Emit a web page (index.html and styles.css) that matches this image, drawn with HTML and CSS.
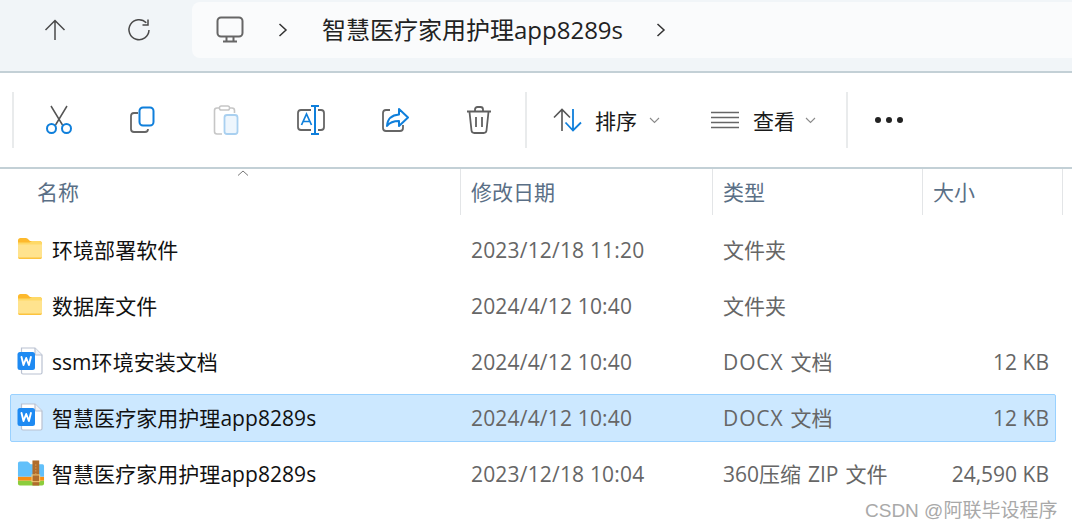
FILE: index.html
```html
<!DOCTYPE html>
<html lang="zh-CN">
<head>
<meta charset="utf-8">
<title>智慧医疗家用护理app8289s</title>
<link rel="stylesheet" href="styles.css">
</head>
<body>
<svg class="defs" width="0" height="0" aria-hidden="true">
  <defs>
    <symbol id="folder" viewBox="0 0 26 22">
      <path d="M1 3.500C1 2 2 1 3.500 1h5.200c.8 0 1.400.3 2 .8L13 4h9.500C24 4 25 5 25 6.500V8H1z" fill="#fdb92c"/>
      <path d="M1 5.500h11.500L15 4h7.500C24 4 25 5 25 6.500v13c0 1.500-1 2.500-2.500 2.500h-19C2 22 1 21 1 19.500z" fill="#fed967"/>
      <path d="M1 7.500h24v11.500c0 1.500-1 3-2.500 3h-19C2 22 1 20.500 1 19z" fill="#ffe38e"/>
      <path d="M1 20.500h24c-.3 1-1.200 1.500-2.500 1.500h-19c-1.300 0-2.200-.5-2.500-1.500z" fill="#fcc33e"/>
    </symbol>
    <symbol id="word" viewBox="0 0 26 28">
      <path d="M4.500 1h13.500l7 7v17.500c0 1-.7 1.500-1.500 1.500H6c-.8 0-1.500-.5-1.500-1.500z" fill="#fff" stroke="#b9c1d1" stroke-width="1.200"/>
      <path d="M18 1v6c0 .6.400 1 1 1h6" fill="#eef1f6" stroke="#b9c1d1" stroke-width="1.200"/>
      <rect x="0.500" y="5" width="17.500" height="18" rx="2.500" fill="#1e8af2"/>
      <path d="M4.500 10l2 8 2.700-7 2.700 7 2-8" fill="none" stroke="#fff" stroke-width="1.900" stroke-linejoin="round" stroke-linecap="round"/>
    </symbol>
    <symbol id="zip" viewBox="0 0 29 26">
      <path d="M1 3c0-1.200.8-2 2-2h7c1 0 1.700.5 2.400 1.200L14 4h12.500C27.500 4 28 4.800 28 6v11H1z" fill="#62c0fa"/>
      <rect x="1" y="17" width="27" height="4" fill="#f98d12"/>
      <path d="M1 21h27v3c0 1.200-.8 2-2 2H3c-1.200 0-2-.8-2-2z" fill="#8ccd3d"/>
      <rect x="16" y="0" width="7" height="26" fill="#b06c2c"/>
      <rect x="15.500" y="15" width="8" height="7" fill="none" stroke="#f4cd7b" stroke-width="1"/>
      <path d="M19.500 4v11" stroke="#d9a25d" stroke-width="1" stroke-dasharray="1.500 1.500"/>
    </symbol>
  </defs>
</svg>

<header class="nav">
  <button class="nav-btn" aria-label="上移">
    <svg width="24" height="24" viewBox="0 0 24 24"><path d="M12 22V2.500M2.500 12 12 2.500 21.500 12" fill="none" stroke="#4a4a4a" stroke-width="1.500"/></svg>
  </button>
  <button class="nav-btn" aria-label="刷新">
    <svg width="24" height="24" viewBox="0 0 24 24"><path d="M19.300 4.800A10 10 0 1 0 22 12" fill="none" stroke="#4a4a4a" stroke-width="1.500"/><path d="M21 1.500v5.500h-5.500" fill="none" stroke="#4a4a4a" stroke-width="1.500"/></svg>
  </button>
  <div class="address">
    <svg class="monitor" width="28" height="28" viewBox="0 0 28 28"><rect x="1.500" y="1.500" width="25" height="19" rx="3.500" fill="none" stroke="#666" stroke-width="2"/><path d="M10.500 21v4M17.500 21v4M7 25.500h14" fill="none" stroke="#666" stroke-width="2"/></svg>
    <svg class="crumb-sep" width="10" height="16" viewBox="0 0 10 16"><path d="M1.500 2 8 8l-6.500 6" fill="none" stroke="#333" stroke-width="1.500"/></svg>
    <span class="crumb">智慧医疗家用护理app8289s</span>
    <svg class="crumb-sep end" width="10" height="16" viewBox="0 0 10 16"><path d="M1.500 2 8 8l-6.500 6" fill="none" stroke="#333" stroke-width="1.500"/></svg>
  </div>
</header>

<div class="toolbar">
  <span class="tool-sep first"></span>
  <div class="tools">
    <button class="tool" aria-label="剪切">
      <svg width="28" height="30" viewBox="0 0 28 30"><path d="M6 1l11.500 19M22 1 10.500 20" fill="none" stroke="#555" stroke-width="1.500"/><circle cx="6.500" cy="23.500" r="4.500" fill="none" stroke="#0f7fdb" stroke-width="2"/><circle cx="21.500" cy="23.500" r="4.500" fill="none" stroke="#0f7fdb" stroke-width="2"/></svg>
    </button>
    <button class="tool" aria-label="复制">
      <svg width="28" height="28" viewBox="0 0 28 28"><path d="M9 7H5C3 7 2 8 2 10v13c0 2 1 3 3 3h11c2 0 3-1 3-3" fill="none" stroke="#666" stroke-width="1.800"/><rect x="10.500" y="1.500" width="14" height="18" rx="3.500" fill="#fff" stroke="#0f7fdb" stroke-width="2"/></svg>
    </button>
    <button class="tool" aria-label="粘贴">
      <svg width="28" height="30" viewBox="0 0 28 30"><path d="M6 3H4C2.500 3 1.500 4 1.500 5.500v21c0 1.500 1 2.500 2.500 2.500h5M17 3h2c1.500 0 2.500 1 2.500 2.500V8" fill="none" stroke="#c6c6c6" stroke-width="1.600"/><rect x="6.500" y="1" width="10" height="4" rx="1.800" fill="#fff" stroke="#c6c6c6" stroke-width="1.500"/><rect x="11.500" y="10" width="13" height="19" rx="2.500" fill="#eef6fd" stroke="#a9d0f0" stroke-width="1.800"/></svg>
    </button>
    <button class="tool" aria-label="重命名">
      <svg width="30" height="30" viewBox="0 0 30 30"><path d="M15 5H5C3 5 2 6 2 8v14c0 2 1 3 3 3h10M22 5h3c2 0 3 1 3 3v14c0 2-1 3-3 3h-3" fill="none" stroke="#666" stroke-width="1.800"/><path d="M5.500 20 10.500 9l5 11M7 16.500h7" fill="none" stroke="#0f7fdb" stroke-width="1.700"/><path d="M15 1h8M15 29h8M19 1v28" fill="none" stroke="#0f7fdb" stroke-width="2"/></svg>
    </button>
    <button class="tool" aria-label="共享">
      <svg width="28" height="26" viewBox="0 0 28 26"><path d="M9 3H5C3 3 2 4 2 6v15c0 2 1 3 3 3h14c2 0 3-1 3-3v-3" fill="none" stroke="#666" stroke-width="1.800"/><path d="M18 2l9 8.500-9 8.500v-5c-6 0-9 1-12 5 .5-7 5-11 12-11.500z" fill="#fff" stroke="#0f7fdb" stroke-width="2" stroke-linejoin="round"/></svg>
    </button>
    <button class="tool" aria-label="删除">
      <svg width="26" height="28" viewBox="0 0 26 28"><path d="M1 5.500h24M9 5V3.500C9 2 10 1 11.500 1h3C16 1 17 2 17 3.500V5M3.500 6l2 18.500c.2 1.600 1.200 2.500 2.800 2.500h9.400c1.600 0 2.600-.9 2.800-2.500l2-18.500" fill="none" stroke="#606060" stroke-width="1.800"/><path d="M10 11v10M16 11v10" fill="none" stroke="#606060" stroke-width="1.800"/></svg>
    </button>
  </div>
  <span class="tool-sep"></span>
  <button class="menu sort">
    <svg width="30" height="24" viewBox="0 0 30 24"><path d="M9 23V2M1 9.500 9 1.500l8 8" fill="none" stroke="#555" stroke-width="1.600"/><path d="M20 1v21M12.500 14.500l7.500 8 8-8" fill="none" stroke="#0f7fdb" stroke-width="1.800"/></svg>
    <span class="menu-label">排序</span>
    <svg class="caret" width="11" height="7" viewBox="0 0 11 7"><path d="M1 1l4.500 4.500L10 1" fill="none" stroke="#8a8a8a" stroke-width="1.100"/></svg>
  </button>
  <button class="menu view">
    <svg width="28" height="18" viewBox="0 0 28 18"><path d="M0 1.500h28M0 6.500h28M0 11.500h28M0 16.500h28" stroke="#666" stroke-width="1.400"/></svg>
    <span class="menu-label">查看</span>
    <svg class="caret" width="11" height="7" viewBox="0 0 11 7"><path d="M1 1l4.500 4.500L10 1" fill="none" stroke="#8a8a8a" stroke-width="1.100"/></svg>
  </button>
  <span class="tool-sep"></span>
  <div class="more" aria-label="更多"><i></i><i></i><i></i></div>
</div>

<main class="list">
  <div class="head">
    <svg class="sort-arrow" width="12" height="6" viewBox="0 0 12 6"><path d="M1 5.500 6 1l5 4.500" fill="none" stroke="#777" stroke-width="1"/></svg>
    <div class="col col-name">名称</div>
    <div class="col col-date">修改日期</div>
    <div class="col col-type">类型</div>
    <div class="col col-size">大小</div>
  </div>
  <div class="rows">
    <div class="row">
      <div class="name"><svg class="ico ico-folder" width="26" height="22"><use href="#folder"/></svg><span>环境部署软件</span></div>
      <div class="cell date">2023/12/18 11:20</div><div class="cell type">文件夹</div><div class="cell size"></div>
    </div>
    <div class="row">
      <div class="name"><svg class="ico ico-folder" width="26" height="22"><use href="#folder"/></svg><span>数据库文件</span></div>
      <div class="cell date">2024/4/12 10:40</div><div class="cell type">文件夹</div><div class="cell size"></div>
    </div>
    <div class="row">
      <div class="name"><svg class="ico" width="26" height="28"><use href="#word"/></svg><span>ssm环境安装文档</span></div>
      <div class="cell date">2024/4/12 10:40</div><div class="cell type"><span class="wide">DOCX</span> 文档</div><div class="cell size">12 KB</div>
    </div>
    <div class="row selected">
      <div class="name"><svg class="ico" width="26" height="28"><use href="#word"/></svg><span>智慧医疗家用护理app8289s</span></div>
      <div class="cell date">2024/4/12 10:40</div><div class="cell type"><span class="wide">DOCX</span> 文档</div><div class="cell size">12 KB</div>
    </div>
    <div class="row">
      <div class="name"><svg class="ico" width="28" height="26"><use href="#zip"/></svg><span>智慧医疗家用护理app8289s</span></div>
      <div class="cell date">2023/12/18 10:04</div><div class="cell type">360压缩 ZIP 文件</div><div class="cell size">24,590 KB</div>
    </div>
  </div>
</main>
<div class="watermark">CSDN @阿联毕设程序</div>
</body>
</html>
```

FILE: styles.css
```css
* { box-sizing: border-box; }
html, body { margin: 0; padding: 0; }
body {
  width: 1072px;
  height: 530px;
  overflow: hidden;
  position: relative;
  background: #fff;
  font-family: "Open Sans", "Noto Sans CJK SC", sans-serif;
  color: #1a1a1a;
}
button { background: none; border: 0; padding: 0; font: inherit; color: inherit; display: flex; align-items: center; }
svg { display: block; flex: none; }
.defs { position: absolute; }

.nav {
  height: 73px;
  background: #f1f5f8;
  border-bottom: 2px solid #c3d0d6;
  display: flex;
  align-items: flex-start;
  padding: 2px 0 0 13px;
}
.nav-btn { width: 84px; height: 56px; justify-content: center; }
.address {
  margin-left: 11px;
  flex: 1;
  height: 56px;
  background: #fafbfc;
  border-radius: 8px 0 0 8px;
  display: flex;
  align-items: center;
  padding-left: 24px;
}
.crumb-sep { margin-left: 34px; margin-top: -1px; }
.crumb { margin-left: 34px; font-size: 24px; color: #222; line-height: 56px; }
.crumb-sep.end { margin-left: 33px; }

.toolbar {
  height: 96px;
  border-bottom: 2px solid #c3d0d6;
  display: flex;
  align-items: center;
  padding: 0 0 0 12px;
}
.tool-sep { width: 2px; height: 56px; background: #e9ebec; flex: none; }
.tools { display: flex; margin-left: 3px; }
.tool { width: 84px; height: 56px; justify-content: center; }
.tools + .tool-sep { margin-left: 4px; }
.menu { height: 56px; }
.sort { margin-left: 26px; width: 130px; }
.view { margin-left: 28px; width: 135px; }
.menu-label { font-size: 21px; margin-left: 12px; color: #1a1a1a; }
.view .menu-label { margin-left: 14px; }
.caret { margin-left: 12px; }
.view .caret { margin-left: 10px; }
.more { display: flex; gap: 5px; margin-left: 27px; }
.more i { width: 6px; height: 6px; border-radius: 50%; background: #222; display: block; }

.list { position: relative; }
.head {
  height: 46px;
  display: grid;
  grid-template-columns: 461px 252px 210px 140px;
  font-size: 21px;
  color: #5a6f86;
  width: 1063px;
}
.col { padding-left: 10px; line-height: 46px; border-right: 1px solid #e3e5e7; }
.col-name { padding-left: 37px; }
.sort-arrow { position: absolute; left: 237px; top: 1px; }

.rows { padding: 11px 16px 0 10px; display: flex; flex-direction: column; gap: 8px; }
.row {
  height: 48px;
  display: grid;
  grid-template-columns: 450px 252px 210px 1fr;
  align-items: center;
  border: 1px solid transparent;
  border-radius: 2px;
  font-size: 21px;
}
.row.selected { background: #cce8ff; border-color: #99d1ff; }
.name { display: flex; align-items: center; color: #111; position: relative; padding: 0 0 2px 42px; margin-left: -1px; letter-spacing: .05px; }
.ico { position: absolute; left: 7px; top: 50%; transform: translateY(-50%); margin-top: -1px; }
.ico-folder { margin-top: -2px; }
.cell { color: #666; padding-left: 10px; white-space: nowrap; }
.cell.date { letter-spacing: .18px; }
.cell.type { padding-bottom: 2px; word-spacing: 1.5px; }
.wide { letter-spacing: .9px; }
.cell.size { text-align: right; padding-right: 6px; padding-left: 0; }

.watermark {
  position: absolute;
  left: 865px;
  top: 498px;
  font-family: "Liberation Sans", "Noto Sans CJK SC", sans-serif;
  font-size: 19px;
  line-height: 26px;
  color: #a9a9a9;
  white-space: nowrap;
}
```
